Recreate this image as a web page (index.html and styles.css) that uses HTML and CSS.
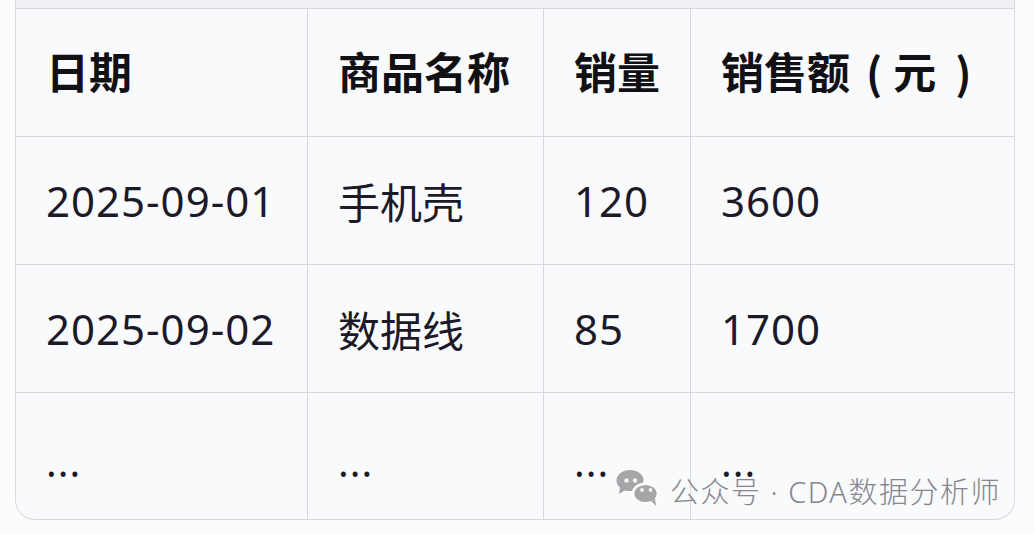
FILE: index.html
```html
<!DOCTYPE html>
<html lang="zh-CN">
<head>
<meta charset="utf-8">
<title>销售数据表</title>
<link rel="stylesheet" href="styles.css">
</head>
<body>
<div class="card">
  <div class="strip"></div>
  <div class="row head">
    <div class="cell">日期</div>
    <div class="cell">商品名称</div>
    <div class="cell">销量</div>
    <div class="cell">销售额<span class="lp">(</span>元<span class="rp">)</span></div>
  </div>
  <div class="row">
    <div class="cell num">2025-09-01</div>
    <div class="cell">手机壳</div>
    <div class="cell num">120</div>
    <div class="cell num">3600</div>
  </div>
  <div class="row">
    <div class="cell num">2025-09-02</div>
    <div class="cell">数据线</div>
    <div class="cell num">85</div>
    <div class="cell num">1700</div>
  </div>
  <div class="row last">
    <div class="cell dots">...</div>
    <div class="cell dots">...</div>
    <div class="cell dots">...</div>
    <div class="cell dots">...</div>
  </div>
</div>
<div class="watermark">
  <svg class="wx" width="44" height="40" viewBox="0 0 44 40">
    <ellipse cx="14" cy="10.5" rx="13.5" ry="10.5" fill="#a6a6a9"/>
    <path d="M4 17 L3 24 L10 19.5 Z" fill="#a6a6a9"/>
    <ellipse cx="29.5" cy="23.5" rx="12.5" ry="9.8" fill="#a6a6a9" stroke="#fbfcfd" stroke-width="2.5"/>
    <path d="M35 31 L40 36 L39 28 Z" fill="#a6a6a9"/>
    <circle cx="10.5" cy="10.5" r="2.2" fill="#f4f4f6"/>
    <circle cx="19" cy="10.5" r="2.2" fill="#f4f4f6"/>
    <circle cx="26" cy="20" r="1.9" fill="#f4f4f6"/>
    <circle cx="34.5" cy="20" r="1.9" fill="#f4f4f6"/>
  </svg>
  <span class="wm-text">公众号 · CDA数据分析师</span>
</div>
</body>
</html>
```

FILE: styles.css
```css
html, body {
  margin: 0;
  padding: 0;
  background: #fcfcfd;
}
body {
  position: relative;
  width: 1034px;
  height: 534px;
  overflow: hidden;
  font-family: "Noto Sans", "Noto Sans CJK SC", sans-serif;
  color: #1c1a29;
}
.card {
  margin-left: 15px;
  width: 1000px;
  box-sizing: border-box;
  border: 1px solid #d7d9df;
  border-top: none;
  border-radius: 0 0 20px 20px;
  overflow: hidden;
  background: #f9fafc;
}
.strip {
  height: 8px;
  background: #eff0f3;
  border-bottom: 1px solid #d7d9df;
}
.row {
  display: grid;
  grid-template-columns: 292px 236px 147px 1fr;
  height: 128px;
  box-sizing: border-box;
  border-bottom: 1px solid #d7d9df;
}
.row.last {
  border-bottom: none;
  height: 126px;
}
.cell {
  display: flex;
  align-items: center;
  padding-left: 30px;
  box-sizing: border-box;
  border-right: 1px solid #d7d9df;
  font-size: 42px;
  white-space: nowrap;
}
.cell:last-child {
  border-right: none;
}
.num {
  letter-spacing: 1px;
}
.head .cell {
  font-weight: 700;
  color: #111015;
  font-size: 43px;
  padding-bottom: 4px;
}
.lp,
.rp {
  font-family: "Noto Sans CJK SC", sans-serif;
  font-weight: 600;
}
.lp {
  margin-left: 16px;
  margin-right: 11px;
}
.rp {
  margin-left: 19px;
}
.dots {
  padding-top: 10px;
  font-size: 40px;
  letter-spacing: 1px;
}
.watermark {
  position: absolute;
  left: 616px;
  top: 470px;
  display: flex;
  align-items: center;
  gap: 10px;
  height: 40px;
}
.wx {
  display: block;
}
.wm-text {
  font-size: 29px;
  font-weight: 300;
  color: #86868c;
  letter-spacing: 1.5px;
}
```
